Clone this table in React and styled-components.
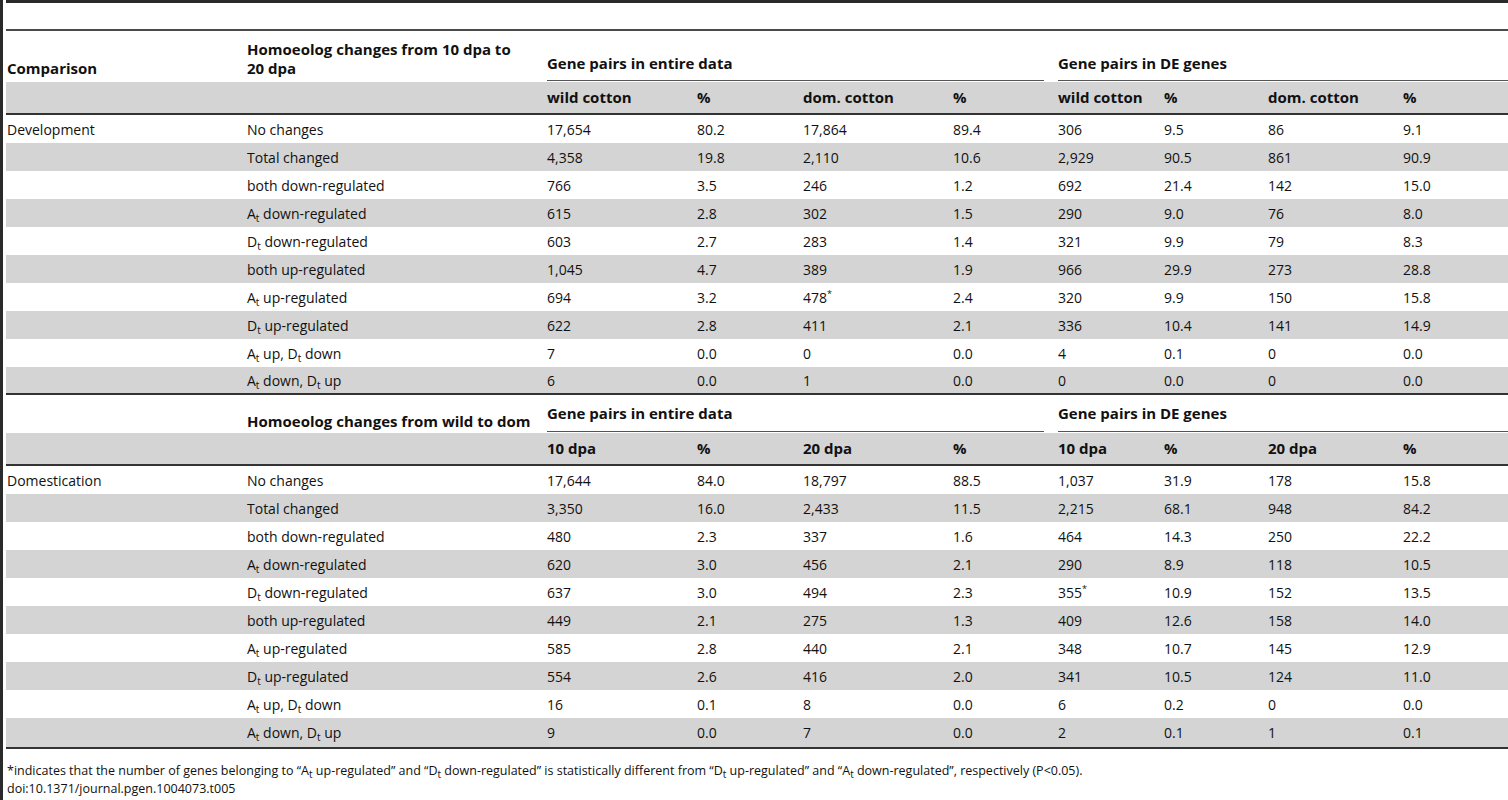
import React from 'react'
import styled, { createGlobalStyle } from 'styled-components'

const Global = createGlobalStyle`
    html, body {
        margin: 0;
        padding: 0;
        background: #fff;
    }
    body {
        font-family: "Open Sans", "Liberation Sans", sans-serif;
        color: #111;
    }
`
const Page = styled.div`
    box-sizing: border-box;
    min-height: 800px;
    width: 1508px;
    border-left: 3px solid #2a2a2a;
    padding-left: 3px;
    overflow: hidden;
`
const Table = styled.table`
    width: 1502px;
    table-layout: fixed;
    border-collapse: separate;
    border-spacing: 0;
    border-top: 3px solid #2a2a2a;
    font-size: 14px;
    line-height: 19px;
`
const Spacer = styled.td`
    height: 26px;
    padding: 0;
    border-bottom: 2px solid #4a4a4a;
`
const HeadRow = styled.tr`
    height: ${p => p.$h}px;
`
const HeadCell = styled.th`
    font-size: 15px;
    font-weight: 700;
    text-align: left;
    vertical-align: bottom;
    padding: 0 6px ${p => p.$pb || 4}px ${p => (p.$first ? 1 : 6)}px;
    white-space: nowrap;
`
const GroupCell = styled.th`
    font-size: 15px;
    font-weight: 700;
    text-align: left;
    vertical-align: bottom;
    padding: 0 ${p => (p.$last ? 0 : 8)}px 1px 6px;
`
const GroupLabel = styled.div`
    padding-bottom: ${p => p.$pb}px;
    border-bottom: 1px solid #555;
`
const SubRow = styled.tr`
    background: #d4d4d4;
    height: 33px;
`
const SubCell = styled.th`
    font-size: 15px;
    font-weight: 700;
    text-align: left;
    padding: 0 6px;
    border-bottom: 2px solid #333;
`
const DataRow = styled.tr`
    background: ${p => (p.$shade ? '#d4d4d4' : '#fff')};
    height: ${p => p.$h}px;
`
const Cell = styled.td`
    padding: 0 6px 0 ${p => (p.$first ? 1 : 6)}px;
    white-space: nowrap;
    vertical-align: middle;
    border-bottom: ${p => (p.$end ? '2px solid #333' : 'none')};
`
const Sub = styled.sub`
    font-size: 10px;
    line-height: 0;
    vertical-align: -3px;
`
const Sup = styled.sup`
    font-size: 9px;
    line-height: 0;
    vertical-align: 6px;
`
const Notes = styled.div`
    font-size: 12.5px;
    line-height: 18px;
    padding: 13px 0 0 1px;
    color: #111;
`

const widths = [235, 300, 150, 106, 150, 105, 106, 104, 135, 111]

// "A_t" -> A with subscript t
const Label = ({ text }) =>
    text.split(/([AD])_t/).map((part, i) =>
        i % 2 === 1 ? (
            <React.Fragment key={i}>
                {part}
                <Sub>t</Sub>
            </React.Fragment>
        ) : (
            <React.Fragment key={i}>{part}</React.Fragment>
        )
    )

const Value = ({ v }) =>
    v.endsWith('*') ? (
        <>
            {v.slice(0, -1)}
            <Sup>*</Sup>
        </>
    ) : (
        v
    )

const development = [
    ['No changes', '17,654', '80.2', '17,864', '89.4', '306', '9.5', '86', '9.1'],
    ['Total changed', '4,358', '19.8', '2,110', '10.6', '2,929', '90.5', '861', '90.9'],
    ['both down-regulated', '766', '3.5', '246', '1.2', '692', '21.4', '142', '15.0'],
    ['A_t down-regulated', '615', '2.8', '302', '1.5', '290', '9.0', '76', '8.0'],
    ['D_t down-regulated', '603', '2.7', '283', '1.4', '321', '9.9', '79', '8.3'],
    ['both up-regulated', '1,045', '4.7', '389', '1.9', '966', '29.9', '273', '28.8'],
    ['A_t up-regulated', '694', '3.2', '478*', '2.4', '320', '9.9', '150', '15.8'],
    ['D_t up-regulated', '622', '2.8', '411', '2.1', '336', '10.4', '141', '14.9'],
    ['A_t up, D_t down', '7', '0.0', '0', '0.0', '4', '0.1', '0', '0.0'],
    ['A_t down, D_t up', '6', '0.0', '1', '0.0', '0', '0.0', '0', '0.0'],
]

const domestication = [
    ['No changes', '17,644', '84.0', '18,797', '88.5', '1,037', '31.9', '178', '15.8'],
    ['Total changed', '3,350', '16.0', '2,433', '11.5', '2,215', '68.1', '948', '84.2'],
    ['both down-regulated', '480', '2.3', '337', '1.6', '464', '14.3', '250', '22.2'],
    ['A_t down-regulated', '620', '3.0', '456', '2.1', '290', '8.9', '118', '10.5'],
    ['D_t down-regulated', '637', '3.0', '494', '2.3', '355*', '10.9', '152', '13.5'],
    ['both up-regulated', '449', '2.1', '275', '1.3', '409', '12.6', '158', '14.0'],
    ['A_t up-regulated', '585', '2.8', '440', '2.1', '348', '10.7', '145', '12.9'],
    ['D_t up-regulated', '554', '2.6', '416', '2.0', '341', '10.5', '124', '11.0'],
    ['A_t up, D_t down', '16', '0.1', '8', '0.0', '6', '0.2', '0', '0.0'],
    ['A_t down, D_t up', '9', '0.0', '7', '0.0', '2', '0.1', '1', '0.1'],
]

const Section = ({ name, rows, lastH = 28 }) =>
    rows.map((row, i) => {
        const end = i === rows.length - 1
        return (
            <DataRow key={name + i} $shade={i % 2 === 1} $h={end ? lastH : 28}>
                <Cell $first $end={end}>{i === 0 ? name : ''}</Cell>
                <Cell $end={end}>
                    <Label text={row[0]} />
                </Cell>
                {row.slice(1).map((v, j) => (
                    <Cell key={j} $end={end}>
                        <Value v={v} />
                    </Cell>
                ))}
            </DataRow>
        )
    })

const SubHeader = ({ labels }) => (
    <SubRow>
        <SubCell />
        <SubCell />
        {labels.map((l, i) => (
            <SubCell key={i}>{l}</SubCell>
        ))}
    </SubRow>
)

const App = () => {
    return (
        <Page>
            <Global />
            <Table>
                <colgroup>
                    {widths.map((w, i) => (
                        <col key={i} style={{ width: w }} />
                    ))}
                </colgroup>
                <tbody>
                    <tr>
                        <Spacer colSpan={10} />
                    </tr>
                    <HeadRow $h={51}>
                        <HeadCell $first $pb={4}>Comparison</HeadCell>
                        <HeadCell $pb={4}>
                            Homoeolog changes from 10 dpa to
                            <br />
                            20 dpa
                        </HeadCell>
                        <GroupCell colSpan={4}>
                            <GroupLabel $pb={7}>Gene pairs in entire data</GroupLabel>
                        </GroupCell>
                        <GroupCell colSpan={4} $last>
                            <GroupLabel $pb={7}>Gene pairs in DE genes</GroupLabel>
                        </GroupCell>
                    </HeadRow>
                    <SubHeader labels={['wild cotton', '%', 'dom. cotton', '%', 'wild cotton', '%', 'dom. cotton', '%']} />
                    <Section name="Development" rows={development} />
                    <HeadRow $h={38}>
                        <HeadCell $first />
                        <HeadCell $pb={2}>Homoeolog changes from wild to dom</HeadCell>
                        <GroupCell colSpan={4}>
                            <GroupLabel $pb={8}>Gene pairs in entire data</GroupLabel>
                        </GroupCell>
                        <GroupCell colSpan={4} $last>
                            <GroupLabel $pb={8}>Gene pairs in DE genes</GroupLabel>
                        </GroupCell>
                    </HeadRow>
                    <SubHeader labels={['10 dpa', '%', '20 dpa', '%', '10 dpa', '%', '20 dpa', '%']} />
                    <Section name="Domestication" rows={domestication} lastH={31} />
                </tbody>
            </Table>
            <Notes>
                <div>
                    *indicates that the number of genes belonging to “A<Sub>t</Sub> up-regulated” and “D<Sub>t</Sub>{' '}
                    down-regulated” is statistically different from “D<Sub>t</Sub> up-regulated” and “A<Sub>t</Sub>{' '}
                    down-regulated”, respectively (P{'<'}0.05).
                </div>
                <div>doi:10.1371/journal.pgen.1004073.t005</div>
            </Notes>
        </Page>
    )
}

export default App
